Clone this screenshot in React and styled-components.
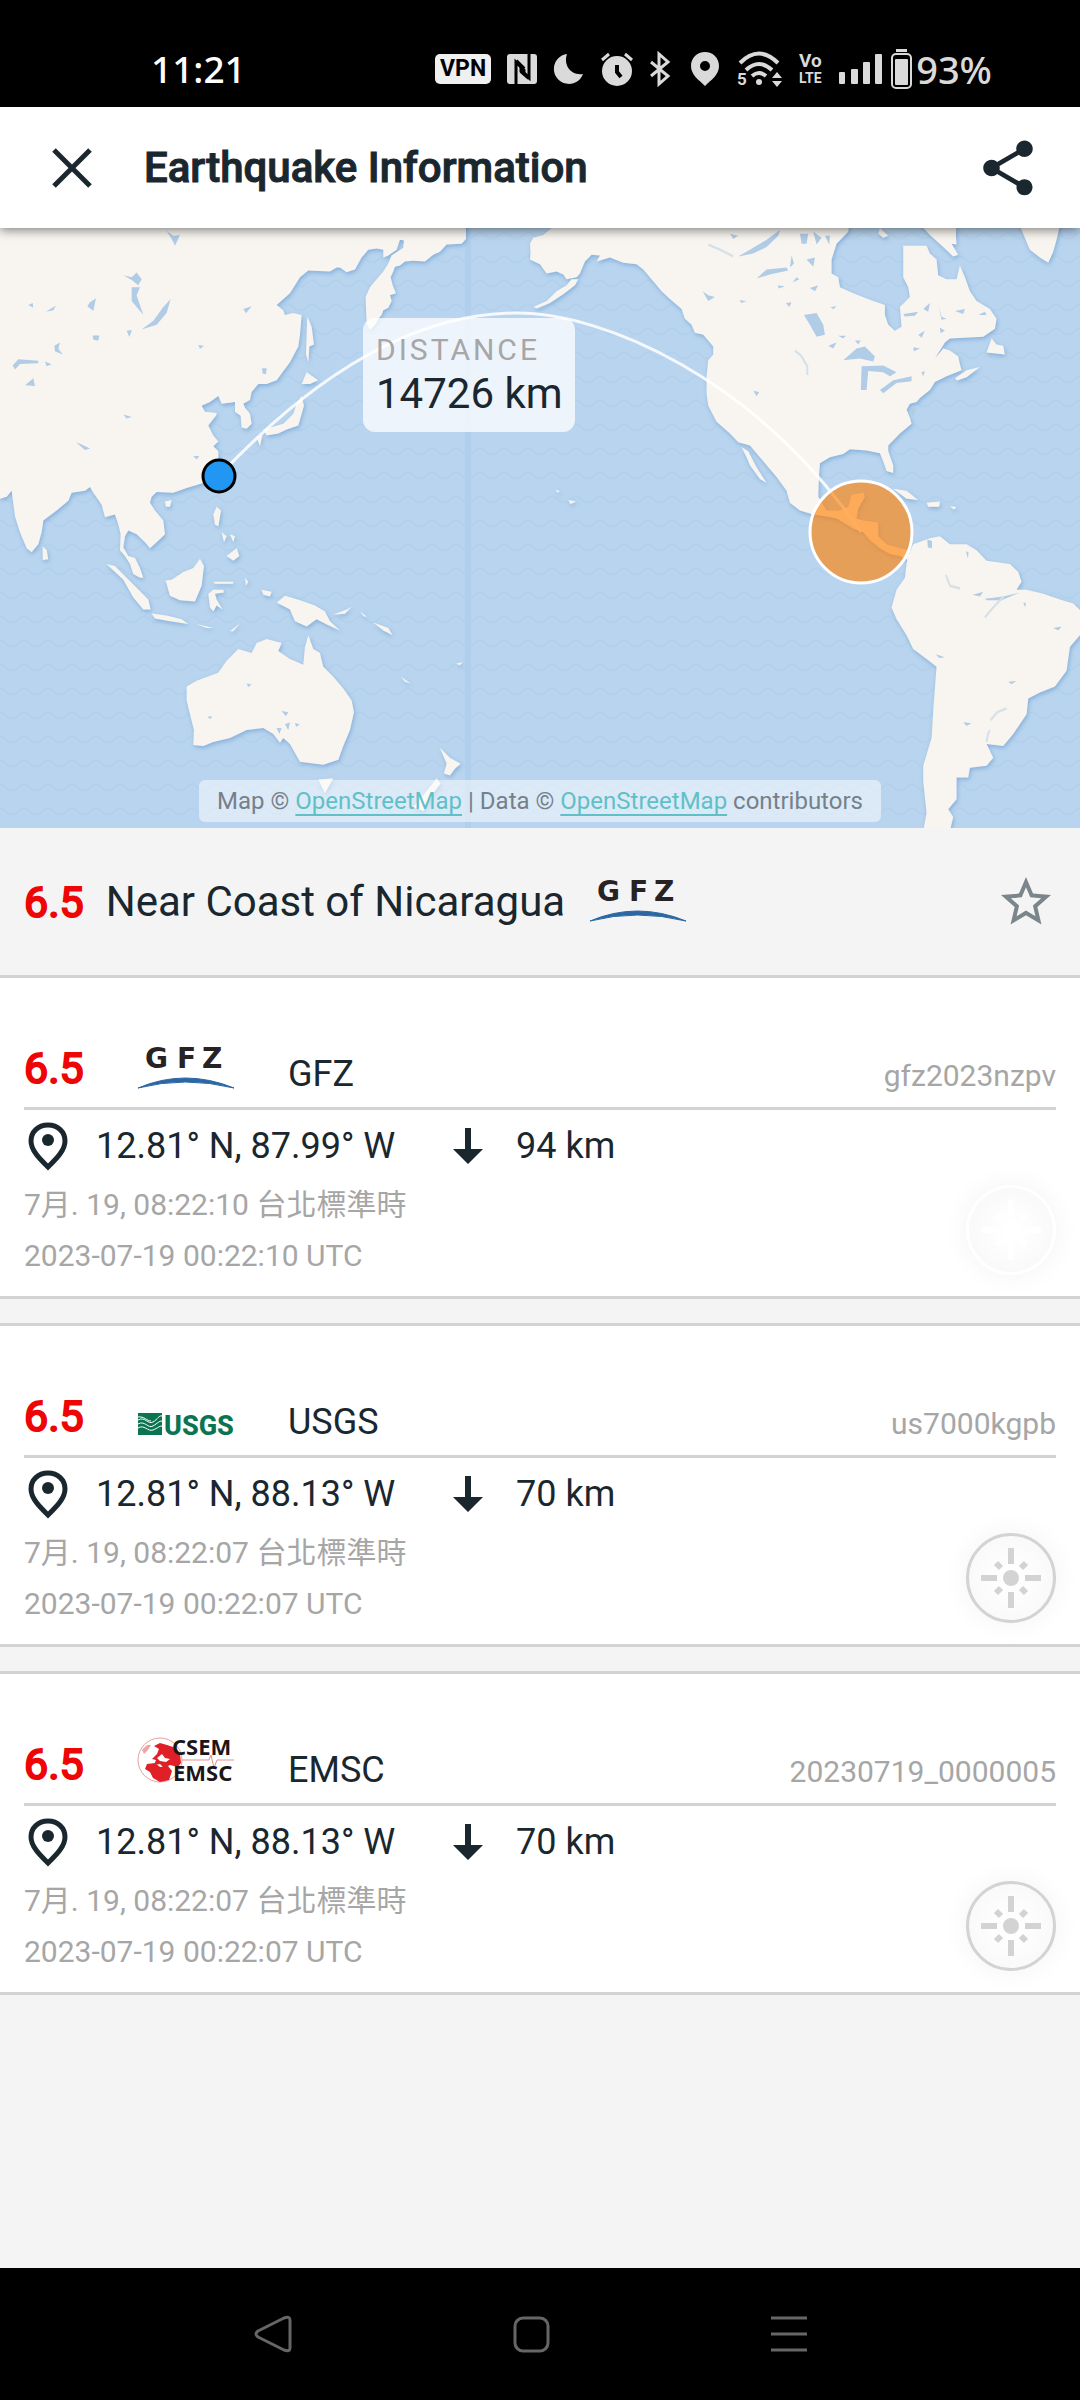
import React from "react";
import styled, { createGlobalStyle } from "styled-components";

const GlobalStyle = createGlobalStyle`
  * {
    box-sizing: border-box;
  }
  body {
    margin: 0;
    background: #f4f4f4;
    color: #1a272f;
    font-family: Roboto, "Noto Sans CJK TC", sans-serif;
  }
  button {
    padding: 0;
    border: 0;
    background: none;
    color: inherit;
    cursor: pointer;
  }
  svg {
    display: block;
    overflow: visible;
  }
`;

const Page = styled.div`
  min-height: 100vh;
  display: flex;
  flex-direction: column;
`;

const StatusBar = styled.div`
  display: flex;
  align-items: center;
  justify-content: space-between;
  height: 107px;
  padding: 30px 88px 0 151px;
  background: #000;
  color: #dadada;
  font-family: "Noto Sans", sans-serif;
`;

const Clock = styled.time`
  color: #fff;
  font-size: 37px;
  font-weight: 500;
  line-height: 40px;
`;

const StatusIcons = styled.div`
  display: flex;
  align-items: center;
  gap: 16px;
`;

const PowerGroup = styled.div`
  display: flex;
  align-items: center;
  gap: 8px;
`;

const Percent = styled.span`
  font-size: 38px;
  font-weight: 500;
  line-height: 40px;
  margin-left: -4px;
`;

const Header = styled.header`
  position: relative;
  z-index: 1;
  display: flex;
  align-items: center;
  height: 121px;
  padding: 0 39px 0 36px;
  background: #fff;
  box-shadow: 0 2px 10px rgba(0, 0, 0, 0.5);
`;

const IconButton = styled.button`
  display: flex;
  align-items: center;
  justify-content: center;
  width: ${(props) => props.$size}px;
  height: ${(props) => props.$size}px;
  color: ${(props) => props.$color || "#1a272f"};
`;

const Title = styled.h1`
  flex: 1;
  margin: 0 0 0 36px;
  font-size: 42px;
  font-weight: 500;
  line-height: 48px;
  -webkit-text-stroke: 1px currentColor;
`;

const MapBox = styled.section`
  position: relative;
  display: flex;
  align-items: flex-end;
  justify-content: center;
  height: 600px;
  padding-bottom: 6px;
  background: #b8d4ee;
  overflow: hidden;
`;

const MapSvg = styled.svg`
  position: absolute;
  top: 0;
  left: 0;
  width: 100%;
  height: 100%;
`;

const DistanceLabel = styled.div`
  position: absolute;
  top: 90px;
  left: 363px;
  height: 114px;
  padding: 12px 12px 0 13px;
  border-radius: 12px;
  background: rgba(255, 255, 255, 0.75);
`;

const DistanceTitle = styled.div`
  color: #a6a6a6;
  font-size: 30px;
  line-height: 40px;
  letter-spacing: 3px;
`;

const DistanceValue = styled.div`
  font-size: 42px;
  line-height: 48px;
`;

const Attribution = styled.div`
  position: relative;
  padding: 0 18px;
  border-radius: 6px;
  background: rgba(255, 255, 255, 0.5);
  color: #76808a;
  font-size: 24px;
  line-height: 42px;
  white-space: nowrap;
  a {
    color: #5fc0c8;
    text-underline-offset: 5px;
    text-decoration-thickness: 2px;
  }
`;

const EventRow = styled.div`
  display: flex;
  align-items: center;
  height: 147px;
  padding: 0 24px;
`;

const Magnitude = styled.span`
  color: #ee0505;
  font-size: 43px;
  font-weight: 400;
  line-height: 42px;
  -webkit-text-stroke: 2px currentColor;
`;

const EventName = styled.h2`
  flex: none;
  margin: 0 24px 0 22px;
  font-size: 42px;
  font-weight: 400;
  line-height: 48px;
`;

const Push = styled.div`
  margin-left: auto;
`;

const ReportList = styled.main`
  flex: 1;
  display: flex;
  flex-direction: column;
  gap: 24px;
`;

const Card = styled.article`
  position: relative;
  padding: 0 24px 15px;
  border-top: 3px solid #d3d3d3;
  border-bottom: 3px solid #d3d3d3;
  background: #fff;
`;

const CardHead = styled.div`
  display: grid;
  grid-template-columns: 113px 151px 1fr auto;
  align-items: end;
  height: 132px;
  padding-bottom: 18px;
  border-bottom: 3px solid #d3d3d3;
`;

const Source = styled.h3`
  margin: 0;
  font-size: 36px;
  font-weight: 400;
  line-height: 30px;
`;

const ReportId = styled.span`
  color: #a6a6a6;
  font-size: 30px;
  line-height: 26px;
`;

const DetailRow = styled.div`
  display: grid;
  grid-template-columns: 72px 354px 66px 1fr;
  align-items: center;
  padding-top: 3px;
  font-size: 36px;
  line-height: 66px;
`;

const TimeLine = styled.div`
  color: #a6a6a6;
  font-size: 30px;
  line-height: 51px;
`;

const LocateButton = styled.button`
  position: absolute;
  right: 24px;
  bottom: 21px;
  display: flex;
  align-items: center;
  justify-content: center;
  width: 90px;
  height: 90px;
  border: 3px solid ${(props) => (props.$active ? "#ffffff" : "#d3d3d3")};
  border-radius: 50%;
  background: radial-gradient(circle, #ffffff 10%, #f9f9f9 75%);
  color: ${(props) => (props.$active ? "#ffffff" : "#d3d3d3")};
  box-shadow: 0 0 28px rgba(0, 0, 0, 0.05);
`;

const NavBar = styled.nav`
  display: flex;
  align-items: center;
  justify-content: center;
  gap: 198px;
  height: 132px;
  padding-right: 18px;
  background: #000;
`;

// Map coordinates are drawn on a 3240 x 1518 grid, stretched over 1080 x 600.
const LAND = [
  // Asia
  "0,0 1398,0 1398,48 1385,60 1340,62 1320,80 1300,88 1275,105 1240,103 1215,105 1200,115 1185,118 1180,130 1172,145 1178,165 1188,185 1170,190 1175,205 1165,222 1150,228 1145,240 1135,250 1125,265 1110,278 1100,262 1097,195 1110,170 1130,150 1150,130 1165,110 1175,90 1210,70 1212,52 1200,50 1190,75 1165,90 1150,95 1150,75 1130,72 1105,75 1085,95 1065,125 1040,132 1020,120 1010,120 990,130 925,128 900,145 870,185 830,215 850,228 855,240 880,235 905,240 900,290 895,320 870,360 830,405 800,415 775,415 755,435 750,455 730,465 735,475 750,490 755,515 740,528 725,525 722,495 705,485 705,460 665,465 655,445 630,460 605,470 615,485 650,488 648,495 625,520 640,545 655,560 640,572 655,585 655,605 630,640 610,665 560,678 520,690 470,688 455,700 450,715 465,735 490,760 495,795 470,815 450,830 435,815 410,795 385,785 375,800 370,828 385,850 405,855 420,880 430,905 420,905 400,895 390,870 375,850 360,835 362,795 355,770 345,745 315,752 305,720 280,690 270,675 255,685 215,690 205,710 170,735 130,760 125,790 115,820 95,840 80,830 60,790 45,750 35,685 20,700 0,705",
  // Indian ocean and south-east Asia
  "128,825 140,835 145,858 128,860",
  "320,870 345,875 380,905 410,930 445,960 452,985 430,985 400,955 370,910 345,890",
  "455,995 500,1000 545,1010 565,1022 510,1015 465,1008",
  "590,1022 640,1032 620,1032",
  "690,1040 720,1020 700,1040",
  "497,912 515,910 550,890 580,880 600,857 612,875 605,925 585,965 540,962 510,950",
  "625,945 640,935 670,935 672,942 645,945 650,960 668,985 650,975 640,990 630,980",
  "650,725 663,735 655,775 645,770 640,745",
  "665,790 680,800 672,815",
  "690,795 705,800 700,815",
  "680,850 710,830 718,850 700,862",
  "495,712 515,708 510,725 498,725",
  "640,915 700,915 700,920 645,920",
  "735,905 745,915 738,925",
  "785,935 815,940 810,952 790,948",
  "830,968 855,950 900,962 945,975 975,990 990,1015 1020,1038 985,1025 950,1010 920,1028 885,1015 870,985 840,972",
  "1000,998 1040,985 1055,978 1035,996",
  "1080,990 1100,1003 1092,1003",
  "1120,1018 1165,1032 1178,1050 1150,1038",
  // Japan and Sakhalin
  "920,385 955,405 930,415 905,415",
  "905,445 912,470 895,520 860,530 835,540 800,545 790,530 850,515 880,490 890,465",
  "770,550 787,545 780,572",
  "922,245 935,270 942,315 928,320 925,360 918,340 920,290",
  // Australia, Tasmania, New Zealand
  "560,1180 590,1165 655,1145 680,1115 715,1085 755,1095 770,1070 800,1060 845,1070 835,1090 870,1110 910,1125 915,1080 925,1050 940,1085 960,1095 970,1130 1000,1155 1030,1185 1055,1215 1062,1245 1050,1290 1030,1330 1015,1365 970,1378 900,1370 870,1325 850,1310 840,1322 820,1300 790,1285 740,1290 690,1310 640,1320 610,1330 580,1328 582,1290 570,1250 560,1215",
  "955,1415 1000,1412 975,1450",
  "1320,1335 1332,1345 1350,1360 1382,1375 1365,1388 1350,1405 1332,1400 1340,1375",
  "1310,1412 1322,1425 1300,1450 1270,1495 1240,1485 1280,1445",
  // Pacific islands
  "1203,1155 1232,1172 1215,1168",
  "1368,1122 1388,1118 1380,1126",
  "1668,682 1680,686 1672,690",
  "1705,708 1728,712 1712,718",
  "1600,220 1640,205 1670,180 1700,165 1715,150 1735,150 1725,165 1690,188 1650,210 1610,224",
  // North and Central America
  "1655,0 1655,20 1630,38 1600,45 1590,60 1592,85 1590,100 1620,112 1640,135 1670,130 1690,138 1700,150 1730,145 1740,135 1755,105 1775,88 1800,90 1790,105 1830,95 1870,108 1910,112 1930,125 1960,155 1985,180 2010,200 2045,225 2055,250 2075,265 2085,285 2110,290 2140,320 2140,340 2125,355 2120,395 2120,440 2125,470 2150,510 2190,540 2215,562 2250,570 2290,610 2330,650 2360,685 2370,715 2400,735 2440,745 2480,750 2510,755 2530,765 2560,780 2590,790 2610,810 2640,830 2670,845 2700,850 2725,860 2730,835 2700,830 2660,820 2635,800 2635,765 2590,760 2570,755 2575,730 2595,700 2590,690 2555,695 2545,725 2520,735 2480,735 2455,700 2457,650 2460,615 2490,600 2530,592 2550,580 2600,583 2640,590 2650,610 2660,635 2680,640 2680,620 2665,585 2665,570 2700,540 2735,515 2730,500 2720,480 2730,465 2750,460 2760,450 2790,430 2805,410 2840,395 2885,380 2880,365 2875,345 2850,330 2830,325 2805,350 2835,310 2850,300 2950,295 2985,275 2990,250 2970,225 2930,205 2910,180 2895,145 2880,115 2870,150 2840,150 2815,140 2810,100 2790,85 2780,65 2710,65 2710,145 2725,170 2730,195 2700,220 2705,270 2685,280 2665,265 2655,240 2655,215 2620,205 2560,185 2520,170 2515,145 2495,135 2495,100 2510,60 2545,30 2550,0",
  "2225,575 2245,585 2270,625 2300,665 2280,655 2250,620 2240,600",
  "2865,400 2900,380 2940,372 2900,398 2872,406",
  "2960,335 2975,300 2990,315 3010,318 3015,340",
  "2750,0 2770,20 2790,38 2830,68 2860,92 2875,88 2855,60 2870,62 2868,40 2870,0",
  "2640,20 2665,40 2650,45 2635,35",
  "3050,0 3065,25 3090,75 3120,95 3145,108 3160,80 3170,50 3184,0",
  // Caribbean
  "2680,680 2720,685 2755,708 2720,705",
  "2780,715 2820,712 2818,725 2785,725",
  "2850,724 2870,726 2862,732",
  // South America
  "2725,850 2740,820 2790,805 2820,800 2850,820 2900,820 2930,835 2960,862 3030,870 3055,890 3065,915 3050,935 3080,935 3130,945 3180,960 3220,970 3245,990 3245,1045 3210,1080 3200,1140 3165,1180 3120,1195 3085,1210 3080,1250 3040,1300 3010,1330 2960,1325 2980,1360 2960,1380 2910,1385 2905,1410 2870,1410 2870,1465 2845,1490 2860,1510 2850,1545 2770,1545 2780,1500 2770,1420 2770,1380 2795,1310 2800,1240 2810,1130 2780,1110 2740,1085 2720,1050 2690,1010 2675,980 2690,935 2715,905 2720,870",
];

const LAKES = [
  "512,200 500,235 470,265 425,277 460,255 490,220",
  "395,170 420,170 410,190 430,240 415,225 395,205",
  "370,140 395,145 410,133 425,150 415,165 395,152",
  "500,28 520,40 540,38 525,65 515,48",
  "270,208 288,198 280,230 262,218",
  "278,292 298,292 295,305 280,303",
  "380,280 396,278 388,296",
  "163,318 180,310 175,325 188,340 165,332",
  "38,368 55,352 115,356 115,362 60,364 45,378",
  "75,418 100,400 105,420",
  "135,358 155,365 140,370",
  "85,215 98,210 100,222",
  "138,232 168,216 160,228",
  "730,225 755,218 738,236",
  "595,316 612,318 600,326",
  "786,375 800,375 798,390 788,388",
  "370,492 395,498 380,502",
  "228,562 245,568 270,578 255,582",
  "580,597 598,597 590,606",
  "740,1172 755,1174 745,1182",
  "845,1242 865,1245 858,1255",
  "855,1275 870,1270 865,1290",
  "885,1272 900,1275 888,1282",
  "830,1285 845,1285 838,1300",
  "622,1256 638,1256 630,1262",
  "2530,355 2570,325 2595,320 2625,345 2620,358 2580,350",
  "2585,370 2650,368 2690,385 2670,395 2650,385 2605,382 2600,430 2583,430",
  "2640,430 2680,405 2735,395 2735,408 2690,412 2650,438",
  "2412,240 2450,235 2470,265 2475,290 2450,295 2430,265",
  "2270,148 2300,125 2360,120 2365,128 2310,138",
  "2215,92 2250,75 2300,50 2340,25 2335,40 2300,68 2260,85",
  "2190,35 2215,40 2200,48",
  "2400,35 2425,35 2420,60 2405,60",
  "2440,30 2465,45 2450,62",
  "2475,40 2490,40 2488,62",
  "2375,90 2382,110 2370,120",
  "2420,100 2445,95 2440,118",
  "2390,145 2398,150 2378,158",
  "2335,165 2355,168 2335,173",
  "2430,172 2455,165 2445,180",
  "2358,210 2375,208 2368,220",
  "2108,180 2125,190 2145,195 2125,205",
  "2218,203 2240,205 2225,210",
  "2492,220 2510,218 2500,226",
  "2485,318 2510,310 2500,325",
  "2515,293 2538,293 2530,300",
  "2565,305 2582,305 2575,315",
  "2260,432 2278,435 2270,446",
  "2710,238 2755,232 2745,242 2715,244",
  "2770,225 2790,210 2785,232",
  "2815,215 2825,245 2840,250 2825,252",
  "2865,230 2895,225 2890,238",
  "2935,240 2955,232 2960,240",
  "2755,290 2775,280 2765,298",
  "2820,272 2835,280 2822,286",
  "2740,322 2760,325 2742,332",
  "2765,385 2775,382 2770,396",
  "2740,468 2748,478 2740,498 2732,480",
  "2782,808 2796,812 2796,830 2784,828",
  "2898,838 2906,840 2904,856",
  "2918,948 2950,940 2940,952",
  "2955,958 3010,952 3060,942 3005,962 2960,962",
  "3070,968 3078,968 3076,980",
  "2808,1098 2835,1106 2818,1108",
  "2890,1270 2915,1273 2900,1280",
  "3025,1168 3050,1166 3035,1174",
  "3160,1032 3185,1028 3175,1038",
];

const RIVERS = [
  "2385,330 2405,345 2422,370 2422,392",
  "2838,898 2850,925 2880,932",
  "2955,1005 2985,975 3012,952",
  "2972,1265 2992,1245 3020,1235",
  "2960,1320 2964,1300 2970,1290",
  "2125,62 2160,75 2200,92",
];

const WorldMap = () => (
  <MapSvg viewBox="0 0 1080 600" preserveAspectRatio="xMidYMid slice" aria-hidden="true">
    <defs>
      <pattern id="waves" width="24" height="24" patternUnits="userSpaceOnUse">
        <path d="M0 4 Q4 5 6 8 Q12 13 18 8 Q20 5 24 4" fill="none" stroke="#b3d0ec" strokeWidth="2" />
      </pattern>
      <filter id="shore" x="-5%" y="-5%" width="110%" height="110%">
        <feDropShadow dx="1" dy="2" stdDeviation="2" floodColor="#7fabd8" floodOpacity="0.9" />
      </filter>
    </defs>
    <rect width="1080" height="600" fill="#b8d4ee" />
    <rect width="1080" height="600" fill="url(#waves)" />
    <rect x="465" width="6" height="600" fill="#b0ceed" />
    <g filter="url(#shore)">
      <g transform="translate(0 -8) scale(0.3333 0.3954)" fill="#f8f5f0">
        {LAND.map((points) => (
          <polygon key={points} points={points} />
        ))}
      </g>
    </g>
    <g transform="translate(0 -8) scale(0.3333 0.3954)">
      {LAKES.map((points) => (
        <polygon key={points} points={points} fill="#b1cce6" />
      ))}
      {RIVERS.map((points) => (
        <polyline key={points} points={points} fill="none" stroke="#d5e0e9" strokeWidth="6" />
      ))}
    </g>
    <path d="M219 248 C330 130 430 85 517 85 S755 150 861 304" fill="none" stroke="#fff" strokeOpacity="0.85" strokeWidth="3" />
    <circle cx="861" cy="304" r="51" fill="#ff8308" fillOpacity="0.65" stroke="#fff" strokeWidth="3" />
    <circle cx="219" cy="248" r="16" fill="#2196f3" stroke="#000" strokeWidth="3" />
  </MapSvg>
);

const NfcIcon = () => (
  <svg width="30" height="30" viewBox="0 0 30 30">
    <rect width="30" height="30" rx="3" fill="currentColor" />
    <path d="M9 30V8L17 16V20M22 0V24L14 17V13" fill="none" stroke="#000" strokeWidth="3" />
    <path d="M9 7l8 8M22 24l-8-7" stroke="#000" strokeWidth="4" />
  </svg>
);

const MoonIcon = () => (
  <svg width="32" height="32" viewBox="0 0 32 32">
    <path d="M14 1A15 15 0 1 0 30 21C18 23 10 12 14 1Z" fill="currentColor" />
  </svg>
);

const AlarmIcon = () => (
  <svg width="32" height="34" viewBox="0 0 32 34">
    <circle cx="16" cy="19" r="15" fill="currentColor" />
    <path d="M1 8l7-6M31 8l-7-6" stroke="currentColor" strokeWidth="3" />
    <path d="M16 13v7l4 5" fill="none" stroke="#000" strokeWidth="4" />
  </svg>
);

const BluetoothIcon = () => (
  <svg width="24" height="34" viewBox="0 0 24 34">
    <path d="M2 10l17 14-9 8V2l9 8L2 24" fill="none" stroke="currentColor" strokeWidth="3" />
  </svg>
);

const PlaceIcon = () => (
  <svg width="32" height="34" viewBox="0 0 32 34">
    <path
      d="M16 0C8 0 2 6 2 14c0 9 8 14 14 20 6-6 14-11 14-20C30 6 24 0 16 0Zm0 9a5 5 0 1 1 0 10 5 5 0 0 1 0-10Z"
      fill="currentColor"
      fillRule="evenodd"
    />
  </svg>
);

const WifiIcon = () => (
  <svg width="46" height="40" viewBox="0 -2 46 40">
    <g fill="none" stroke="currentColor" strokeWidth="4">
      <path d="M3 12Q22-7 41 12" />
      <path d="M9 19Q22 7 35 19" />
      <path d="M15 25Q22 19 29 25" />
    </g>
    <circle cx="22" cy="31" r="3" fill="currentColor" />
    <text x="0" y="34" fontSize="17" fontWeight="700" fontFamily="Roboto, sans-serif" fill="currentColor">
      5
    </text>
    <path d="M35 27l5-6 5 6zM35 30l5 6 5-6z" fill="currentColor" />
  </svg>
);

const VolteIcon = () => (
  <svg width="24" height="40" viewBox="0 -4 24 40" fill="currentColor" fontFamily="Roboto, sans-serif" fontWeight="700">
    <text x="0" y="14" fontSize="19">
      Vo
    </text>
    <text x="0" y="30" fontSize="14">
      LTE
    </text>
  </svg>
);

const SignalIcon = () => (
  <svg width="44" height="30" viewBox="0 0 44 30" fill="currentColor">
    <rect x="0" y="18" width="6" height="12" rx="1" />
    <rect x="12" y="15" width="7" height="15" rx="1" />
    <rect x="24" y="8" width="7" height="22" rx="1" />
    <rect x="36" y="0" width="7" height="30" rx="1" />
  </svg>
);

const BatteryIcon = () => (
  <svg width="21" height="40" viewBox="0 0 21 40">
    <rect x="5" y="0" width="11" height="3" fill="currentColor" />
    <rect x="1" y="5" width="19" height="34" rx="4" fill="none" stroke="currentColor" strokeWidth="2" />
    <rect x="4" y="10" width="13" height="26" rx="1" fill="currentColor" />
  </svg>
);

const VpnBadge = styled.span`
  width: 56px;
  border-radius: 5px;
  background: #f0f0f0;
  color: #000;
  font-family: Roboto, sans-serif;
  font-size: 23px;
  font-weight: 700;
  line-height: 30px;
  text-align: center;
`;

const CloseIcon = () => (
  <svg width="44" height="44" viewBox="0 0 44 44">
    <path d="M4 4l36 36M40 4L4 40" stroke="currentColor" strokeWidth="5" />
  </svg>
);

const ShareIcon = () => (
  <svg width="66" height="66" viewBox="0 0 24 24" fill="currentColor">
    <path d="M18 16.08c-.76 0-1.44.3-1.96.77L8.91 12.7c.05-.23.09-.46.09-.7s-.04-.47-.09-.7l7.05-4.11c.54.5 1.25.81 2.04.81 1.66 0 3-1.34 3-3s-1.34-3-3-3-3 1.34-3 3c0 .24.04.47.09.7L8.04 9.81C7.5 9.31 6.79 9 6 9c-1.66 0-3 1.34-3 3s1.34 3 3 3c.79 0 1.5-.31 2.04-.81l7.12 4.16c-.05.21-.08.43-.08.65 0 1.61 1.31 2.92 2.92 2.92s2.92-1.31 2.92-2.92-1.31-2.92-2.92-2.92z" />
  </svg>
);

const StarIcon = () => (
  <svg width="60" height="60" viewBox="0 0 24 24" fill="currentColor">
    <path d="M22 9.24l-7.19-.62L12 2 9.19 8.63 2 9.24l5.46 4.73L5.82 21 12 17.27 18.18 21l-1.63-7.03L22 9.24zM12 15.4l-3.76 2.27 1-4.28-3.32-2.88 4.38-.38L12 6.1l1.71 4.04 4.38.38-3.32 2.88 1 4.28L12 15.4z" />
  </svg>
);

const PinIcon = () => (
  <svg width="48" height="48" viewBox="0 0 48 48">
    <path d="M24 3C14 3 7 10 7 19c0 10 10 19 17 26 7-7 17-16 17-26C41 10 34 3 24 3Z" fill="none" stroke="currentColor" strokeWidth="5" />
    <circle cx="24" cy="18" r="6" fill="currentColor" />
  </svg>
);

const DepthIcon = () => (
  <svg width="36" height="36" viewBox="0 0 36 36" fill="currentColor">
    <path d="M15 0h6v21h12L18 36 3 21h12z" />
  </svg>
);

const LocateIcon = () => (
  <svg width="60" height="60" viewBox="0 0 60 60" stroke="currentColor" strokeWidth="6">
    <circle cx="30" cy="30" r="8" fill="currentColor" stroke="none" />
    <path d="M30 0v16M30 44v16M0 30h16M44 30h16" />
    <path d="M15 15l5 5M45 15l-5 5M15 45l5-5M45 45l-5-5" />
  </svg>
);

const GfzLogo = () => (
  <svg width="98" height="41" viewBox="0 0 98 41" role="img" aria-label="GFZ logo">
    <g fontFamily="DejaVu Sans, sans-serif" fontSize="28" fontWeight="700" fill="#272324">
      <text x="8 40 65" y="20">
        GFZ
      </text>
    </g>
    <path d="M1 40Q48 20 97 40Q48 28 1 40Z" fill="#2b67a3" stroke="#2b67a3" />
  </svg>
);

const UsgsLogo = () => (
  <svg width="98" height="25" viewBox="0 0 98 25" role="img" aria-label="USGS logo">
    <rect x="1" y="1" width="24" height="22" fill="#0b7450" />
    <path
      d="M1 8C8 4 11 13 16 10S22 3 25 4M1 12C8 8 11 17 16 14S22 9 25 9M1 16C7 12 11 20 16 18S22 14 25 14M1 5C7 4 10 9 14 9"
      fill="none"
      stroke="#fff"
      strokeWidth="1"
    />
    <text x="27" y="23" fontFamily="Liberation Sans Narrow, Roboto, sans-serif" fontSize="27" fontWeight="800" fill="#0b7450">
      USGS
    </text>
  </svg>
);

const EmscLogo = () => (
  <svg width="98" height="48" viewBox="0 0 98 48" role="img" aria-label="CSEM EMSC logo">
    <circle cx="23" cy="23" r="22" fill="#fff" stroke="#e5a0a0" />
    <path d="M17 9l6-3 7 2 9 3 4 6 1 9-3 4-8-2-6 3-4-4-6 1 2-5-4-1 5-5 2-5z" fill="#e01f26" />
    <path d="M10 27l8-1 5 4 8-1 4 5-3 9-9 2-7-4-3-6-5-3z" fill="#e01f26" />
    <path d="M20 21l5-4 3 4 5 1-4 3-6-1z" fill="#fff" />
    <path d="M5 13l5-5 4 0-3 5-4 4z" fill="#eda5a5" />
    <path d="M45 23h27l2-5 3 13 3-8h17" fill="none" stroke="#e38f8f" />
    <g fontFamily="Noto Sans, sans-serif" fontSize="22" fontWeight="700" fill="#1d1617">
      <text x="35" y="18">
        CSEM
      </text>
      <text x="36" y="44">
        EMSC
      </text>
    </g>
  </svg>
);

const REPORTS = [
  {
    source: "GFZ",
    Logo: GfzLogo,
    id: "gfz2023nzpv",
    coords: "12.81° N, 87.99° W",
    depth: "94 km",
    local: "7月. 19, 08:22:10 台北標準時",
    utc: "2023-07-19 00:22:10 UTC",
    active: true,
  },
  {
    source: "USGS",
    Logo: UsgsLogo,
    id: "us7000kgpb",
    coords: "12.81° N, 88.13° W",
    depth: "70 km",
    local: "7月. 19, 08:22:07 台北標準時",
    utc: "2023-07-19 00:22:07 UTC",
  },
  {
    source: "EMSC",
    Logo: EmscLogo,
    id: "20230719_0000005",
    coords: "12.81° N, 88.13° W",
    depth: "70 km",
    local: "7月. 19, 08:22:07 台北標準時",
    utc: "2023-07-19 00:22:07 UTC",
  },
];

const Report = ({ report }) => {
  const { Logo } = report;
  return (
    <Card>
      <CardHead>
        <Magnitude>6.5</Magnitude>
        <Logo />
        <Source>{report.source}</Source>
        <ReportId>{report.id}</ReportId>
      </CardHead>
      <DetailRow>
        <PinIcon />
        <span>{report.coords}</span>
        <DepthIcon />
        <span>{report.depth}</span>
      </DetailRow>
      <TimeLine>{report.local}</TimeLine>
      <TimeLine>{report.utc}</TimeLine>
      <LocateButton $active={report.active} aria-label={`Show ${report.source} on map`}>
        <LocateIcon />
      </LocateButton>
    </Card>
  );
};

const App = () => (
  <Page>
    <GlobalStyle />
    <StatusBar>
      <Clock>11:21</Clock>
      <StatusIcons>
        <VpnBadge>VPN</VpnBadge>
        <NfcIcon />
        <MoonIcon />
        <AlarmIcon />
        <BluetoothIcon />
        <PlaceIcon />
        <WifiIcon />
        <VolteIcon />
        <PowerGroup>
          <SignalIcon />
          <BatteryIcon />
          <Percent>93%</Percent>
        </PowerGroup>
      </StatusIcons>
    </StatusBar>
    <Header>
      <IconButton $size={72} aria-label="Close">
        <CloseIcon />
      </IconButton>
      <Title>Earthquake Information</Title>
      <IconButton $size={66} aria-label="Share">
        <ShareIcon />
      </IconButton>
    </Header>
    <MapBox>
      <WorldMap />
      <DistanceLabel>
        <DistanceTitle>DISTANCE</DistanceTitle>
        <DistanceValue>14726 km</DistanceValue>
      </DistanceLabel>
      <Attribution>
        Map © <a href="#osm">OpenStreetMap</a> | Data © <a href="#osm-data">OpenStreetMap</a> contributors
      </Attribution>
    </MapBox>
    <EventRow>
      <Magnitude>6.5</Magnitude>
      <EventName>Near Coast of Nicaragua</EventName>
      <GfzLogo />
      <Push>
        <IconButton $size={60} $color="#7b868b" aria-label="Add to favourites">
          <StarIcon />
        </IconButton>
      </Push>
    </EventRow>
    <ReportList>
      {REPORTS.map((report) => (
        <Report key={report.source} report={report} />
      ))}
    </ReportList>
    <NavBar>
      <IconButton $size={60} $color="#666" aria-label="Back">
        <svg width="36" height="36" viewBox="0 0 36 36" fill="none" stroke="currentColor" strokeWidth="3">
          <path d="M3 15L29 2Q35 0 35 4V32Q35 36 29 34L3 21Q-1 18 3 15Z" strokeLinejoin="round" />
        </svg>
      </IconButton>
      <IconButton $size={60} $color="#666" aria-label="Home">
        <svg width="36" height="36" viewBox="0 0 36 36" fill="none" stroke="currentColor" strokeWidth="3">
          <rect x="2" y="2" width="33" height="33" rx="8" />
        </svg>
      </IconButton>
      <IconButton $size={60} $color="#666" aria-label="Recent apps">
        <svg width="36" height="36" viewBox="0 0 36 36" stroke="currentColor" strokeWidth="3">
          <path d="M0 2h36M0 18h36M0 34h36" />
        </svg>
      </IconButton>
    </NavBar>
  </Page>
);

export default App;
